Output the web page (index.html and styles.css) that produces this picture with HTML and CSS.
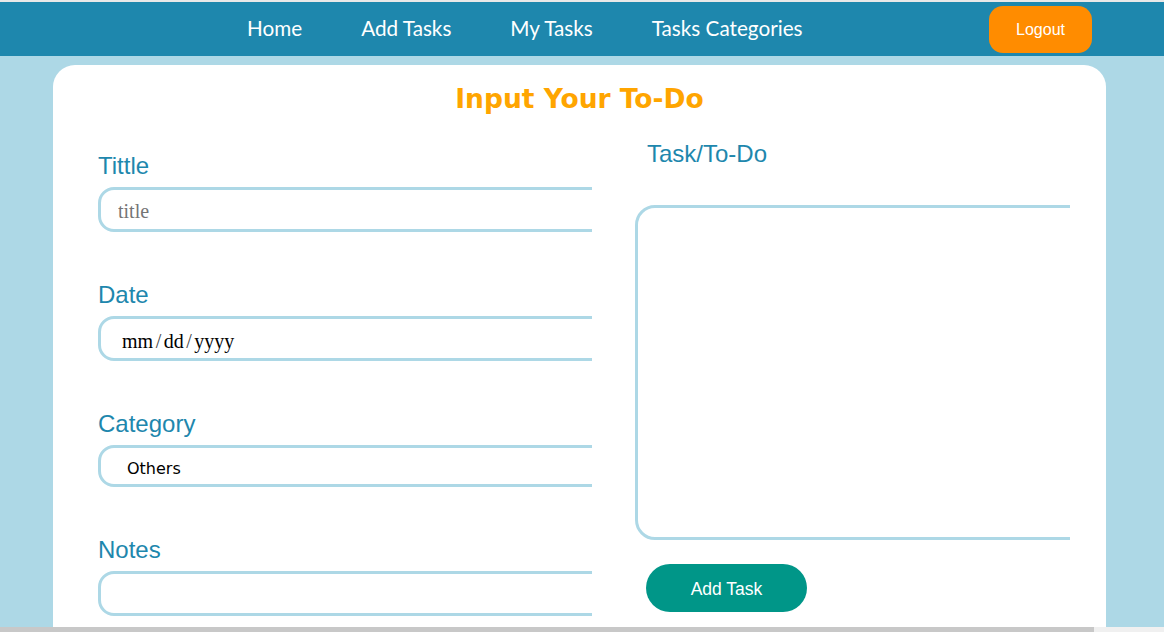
FILE: index.html
```html
<!DOCTYPE html>
<html lang="en">
<head>
<meta charset="utf-8">
<title>Input Your To-Do</title>
<link rel="stylesheet" href="styles.css">
</head>
<body>
<nav class="navbar">
  <ul class="nav-links">
    <li><a class="nav-link" href="#">Home</a></li>
    <li><a class="nav-link" href="#">Add Tasks</a></li>
    <li><a class="nav-link" href="#">My Tasks</a></li>
    <li><a class="nav-link" href="#">Tasks Categories</a></li>
  </ul>
  <button class="logout" type="button">Logout</button>
</nav>
<main class="card">
  <h1 class="card-title">Input Your To-Do</h1>
  <form class="todo-form">
    <div class="col col-left">
      <div class="field">
        <label class="field-label" for="title">Tittle</label>
        <input id="title" class="field-input" type="text" placeholder="title">
      </div>
      <div class="field">
        <label class="field-label" for="date">Date</label>
        <input id="date" class="field-input date-input" type="date">
      </div>
      <div class="field">
        <label class="field-label" for="category">Category</label>
        <select id="category" class="field-input field-select">
          <option>Others</option>
        </select>
      </div>
      <div class="field">
        <label class="field-label" for="notes">Notes</label>
        <input id="notes" class="field-input" type="text">
      </div>
    </div>
    <div class="col col-right">
      <label class="field-label task-label" for="task">Task/To-Do</label>
      <textarea id="task" class="task-area"></textarea>
      <button class="add-btn" type="button">Add Task</button>
    </div>
  </form>
</main>
<div class="hscroll"><div class="hscroll-thumb"></div></div>
</body>
</html>
```
FILE: styles.css
```css
* { box-sizing: border-box; }

html, body {
  margin: 0;
  padding: 0;
}

body {
  background: #add8e6;
  border-top: 2px solid #e8e8e8;
  font-family: "Liberation Sans", Arial, sans-serif;
  overflow: hidden;
  height: 632px;
}

.navbar {
  display: flex;
  align-items: center;
  height: 54px;
  background: #1e87ad;
  padding-left: 247px;
}

.nav-links {
  display: flex;
  gap: 59px;
  list-style: none;
  margin: 0;
  padding: 0;
  position: relative;
  top: -1px;
}

.nav-link {
  color: #ffffff;
  text-decoration: none;
  font-family: "Lato", "Open Sans", sans-serif;
  font-size: 20.7px;
}

.logout {
  margin-left: auto;
  margin-right: 72px;
  width: 103px;
  height: 47px;
  border: none;
  border-radius: 14px;
  background: #ff8c00;
  color: #ffffff;
  font-family: "Liberation Sans", Arial, sans-serif;
  font-size: 16px;
  position: relative;
  top: 0.5px;
}

.card {
  background: #ffffff;
  margin: 9px 58px 0 53px;
  border-radius: 22px 22px 0 0;
  padding: 19px 36px 60px 45px;
}

.card-title {
  margin: 0 9px 0 0;
  text-align: center;
  color: #ffa500;
  font-family: "DejaVu Sans", Verdana, sans-serif;
  font-weight: bold;
  font-size: 26.5px;
  line-height: 29px;
}

.todo-form {
  display: grid;
  grid-template-columns: 494px 435px;
  column-gap: 43px;
  margin-top: 27px;
}

.col {
  overflow: hidden;
}

.col-left {
  padding-top: 12px;
}

.field {
  margin-bottom: 49px;
}

.field-label {
  display: block;
  color: #1e87ad;
  font-family: "Liberation Sans", Arial, sans-serif;
  font-size: 24px;
  line-height: 28px;
  margin-bottom: 7px;
}

.field-input {
  display: block;
  width: 580px;
  height: 45px;
  border: 3px solid #add8e6;
  border-radius: 16px;
  padding: 4px 0 0 17px;
  font-family: "Liberation Serif", "Times New Roman", serif;
  font-size: 20px;
  color: #000000;
  background: #ffffff;
  outline: none;
}

.field-input::placeholder {
  color: #757575;
}

.date-input {
  padding: 5px 0 0 20px;
}

.date-input::-webkit-datetime-edit-text {
  padding: 0 1.5px;
  color: #444444;
}

.field-select {
  height: 42px;
  appearance: none;
  -webkit-appearance: none;
  padding: 5px 0 0 26px;
  font-family: "DejaVu Sans", sans-serif;
  font-size: 16px;
}

.task-label {
  margin-left: 12px;
  margin-bottom: 37px;
}

.task-area {
  display: block;
  width: 520px;
  height: 335px;
  border: 3px solid #add8e6;
  border-radius: 20px;
  resize: none;
  outline: none;
  background: #ffffff;
}

.add-btn {
  display: block;
  margin: 24px 0 0 11px;
  width: 161px;
  height: 48px;
  border: none;
  border-radius: 24px;
  background: #009688;
  color: #ffffff;
  font-family: "Liberation Sans", Arial, sans-serif;
  font-size: 17.5px;
  padding-top: 3px;
}

.hscroll {
  position: fixed;
  left: 0;
  right: 0;
  bottom: 0;
  height: 5px;
  background: #f0f0f0;
}

.hscroll-thumb {
  width: 1094px;
  height: 100%;
  background: #c8c8c8;
}
```
